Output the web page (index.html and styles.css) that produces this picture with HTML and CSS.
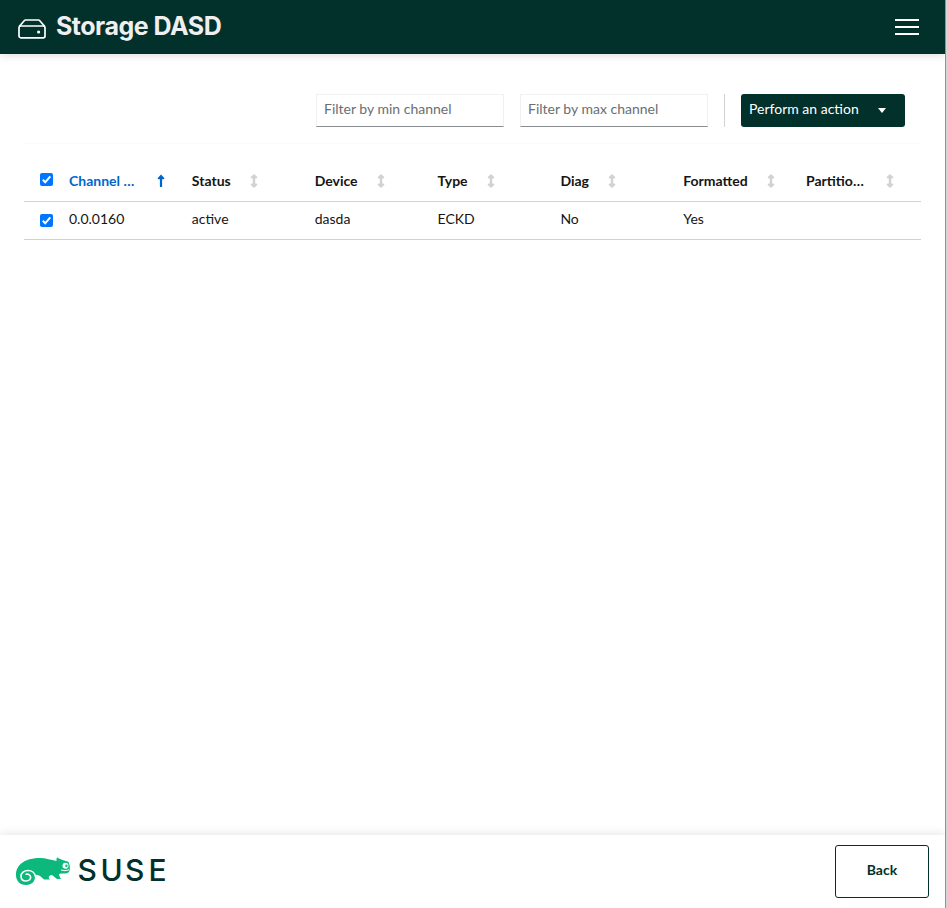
FILE: index.html
```html
<!DOCTYPE html>
<html lang="en">
<head>
<meta charset="utf-8">
<title>Storage DASD</title>
<link rel="stylesheet" href="styles.css">
</head>
<body>
<svg class="defs" aria-hidden="true">
  <symbol id="sort" viewBox="0 0 8 14"><path d="M4 0 7.500 3.300 6.500 4.500H5.200V9.500H6.500L7.500 10.700 4 14 .5 10.700 1.500 9.500H2.800V4.500H1.500L.5 3.300Z"/></symbol>
  <symbol id="sort-up" viewBox="0 0 8 14"><path d="M4 .6 7.500 4.200 6.600 5.200H5.100V13H2.900V5.200H1.400L.5 4.200Z"/></symbol>
  <symbol id="check" viewBox="0 0 13 13"><path d="M2.800 6.800 5.200 9.300 10.300 3.300" fill="none" stroke="#fff" stroke-width="2"/></symbol>
</svg>
<div class="page">
  <header class="header">
    <h1 class="title">
      <svg class="drive" width="28" height="21" viewBox="0 0 28 21" fill="none" stroke="#fff" stroke-width="1.7" stroke-linejoin="round">
        <path d="M1.200 7.500 6.200 1.700Q6.800 1 7.600 1H20.400Q21.200 1 21.800 1.700L26.800 7.500"/>
        <rect x="1" y="7" width="26" height="11.800" rx="1.800"/>
        <circle cx="20.600" cy="13" r="1.600" fill="#fff" stroke="none"/>
      </svg>
      <span class="title-text">Storage DASD</span>
    </h1>
    <button class="menu" aria-label="Menu"><i></i><i></i><i></i></button>
  </header>
  <main class="main">
    <div class="toolbar">
      <input class="filter" placeholder="Filter by min channel">
      <input class="filter" placeholder="Filter by max channel">
      <span class="divider"></span>
      <button class="action">Perform an action <i class="caret"></i></button>
    </div>
    <div class="table">
      <div class="row head">
        <span class="box"><svg><use href="#check"/></svg></span>
        <span class="cell sorted"><b>Channel …</b><svg class="sort"><use href="#sort-up"/></svg></span>
        <span class="cell"><b>Status</b><svg class="sort"><use href="#sort"/></svg></span>
        <span class="cell"><b>Device</b><svg class="sort"><use href="#sort"/></svg></span>
        <span class="cell"><b>Type</b><svg class="sort"><use href="#sort"/></svg></span>
        <span class="cell"><b>Diag</b><svg class="sort"><use href="#sort"/></svg></span>
        <span class="cell"><b>Formatted</b><svg class="sort"><use href="#sort"/></svg></span>
        <span class="cell clipped"><b>Partitio…</b><svg class="sort"><use href="#sort"/></svg></span>
      </div>
      <div class="row">
        <span class="box"><svg><use href="#check"/></svg></span>
        <span class="cell">0.0.0160</span>
        <span class="cell">active</span>
        <span class="cell">dasda</span>
        <span class="cell">ECKD</span>
        <span class="cell">No</span>
        <span class="cell">Yes</span>
        <span class="cell"></span>
      </div>
    </div>
  </main>
  <footer class="footer">
    <svg class="logo" width="160" height="40" viewBox="0 -5 160 40">
      <path fill="#0cb87c" d="M0 18C0 7 10 1 24 1 30 1 35 3 40.500 4 40.500 1 40.500 .3 41.500 .4 45 3 50 3.400 52.500 5 54 8 54.500 12 53 15 50 17.500 46 16 43 17 43 19 44 20 45 22H41C38 20 37 18 35 18 32 19 32.500 21 34 22.500H28C26 21 25 19 23 18.500 21 17.500 19 18 19 20 19 25 15 28 10 28 4 28 0 24 0 18Z"/>
      <path fill="none" stroke="#fff" stroke-width="1.600" stroke-linecap="round" d="M19.500 20C19.200 15.500 15.500 13.500 12 13.500 8 13.500 5 16 5 19.200 5.100 22.500 7.500 24 10 24 13.200 24 14.800 22 14.600 20 14.300 17.700 12 16.800 10.200 17.300"/>
      <circle cx="49.500" cy="8.700" r="3" fill="#fff"/><circle cx="50.400" cy="8.700" r="1.200" fill="#0cb87c"/>
      <path d="M45 13Q49 14.500 53 12.800" fill="none" stroke="#fff" stroke-width="1"/>
      <text class="brand" x="61.500 84.500 109 132.500" y="23.500">SUSE</text>
    </svg>
    <button class="back">Back</button>
  </footer>
</div>
<div class="edge"></div>
</body>
</html>
```
FILE: styles.css
```css
* { box-sizing: border-box; }
body {
  margin: 0;
  height: 908px;
  display: flex;
  overflow: hidden;
  background: #fff;
  color: #151515;
  font: 14px/21px Lato, "Liberation Sans", sans-serif;
}
button, input { font: inherit; }
.defs { position: absolute; width: 0; height: 0; }
.page { flex: 1; display: flex; flex-direction: column; min-width: 0; }
.header {
  height: 54px;
  display: flex;
  align-items: center;
  justify-content: space-between;
  padding: 0 26px 0 18px;
  background: #02302b;
  box-shadow: 0 2px 8px rgba(0, 0, 0, .12);
}
.title { display: flex; align-items: center; margin: 0; color: #efefef; }
.drive { margin: 4px 10px 0 0; }
.title-text {
  padding-bottom: 2px;
  font: 700 25px/36px Inter, sans-serif;
  letter-spacing: -.5px;
  white-space: nowrap;
}
.menu {
  width: 24px;
  padding: 0;
  border: 0;
  background: none;
  display: flex;
  flex-direction: column;
  gap: 5px;
}
.menu i { height: 2px; background: #fff; }
.main { flex: 1; padding: 40px 24px 0; }
.toolbar {
  display: flex;
  justify-content: flex-end;
  gap: 16px;
  height: 50px;
  padding: 0 16px 16px 0;
  border-bottom: 1px solid #fafafa;
}
.filter {
  width: 188px;
  height: 33px;
  padding: 0 7px 4px;
  border: 1px solid #f0f0f0;
  border-bottom-color: #8a8d90;
  background: #fff;
  outline: 0;
}
.filter::placeholder { color: #6a6e73; opacity: 1; }
.divider { width: 1px; height: 33px; background: #d2d2d2; }
.action {
  width: 164px;
  height: 33px;
  display: flex;
  align-items: center;
  justify-content: space-between;
  padding: 0 19px 4px 8px;
  border: 0;
  border-radius: 3px;
  background: #02302b;
  color: #fff;
}
.caret {
  margin-top: 3px;
  border: 4.5px solid transparent;
  border-top: 5px solid #fff;
  border-bottom: 0;
}
.row {
  display: grid;
  grid-template-columns: 45px repeat(6, 122.85px) 1fr;
  align-items: center;
  height: 38px;
  border-bottom: 1px solid #d2d2d2;
}
.head { height: 58px; padding-top: 17px; }
.cell { display: flex; align-items: center; padding-bottom: 4px; white-space: nowrap; }
.head .cell { padding-bottom: 2px; }
.sorted { color: #06c; }
.sort { width: 8px; height: 14px; margin: 1px 0 0 19px; fill: #d2d2d2; }
.sorted .sort { margin-left: 23px; fill: #06c; }
.clipped .sort { margin-left: 22px; }
.box {
  width: 13px;
  height: 13px;
  margin-left: 16px;
  border-radius: 2px;
  background: #0075ff;
}
.head .box { margin-bottom: 4px; }
.box svg { display: block; width: 13px; height: 13px; }
.footer {
  height: 73px;
  display: flex;
  align-items: center;
  justify-content: space-between;
  padding: 0 16px;
  box-shadow: 0 -2px 8px rgba(0, 0, 0, .09);
}
.brand { font: 500 30px Inter, sans-serif; fill: #02302b; }
.back {
  width: 94px;
  height: 53px;
  padding: 0 0 4px;
  border: 1px solid #02302b;
  border-radius: 3px;
  background: #fff;
  color: #02302b;
  font-weight: 700;
}
.edge { width: 2px; border-left: 1px solid #929292; background: #d5d5d8; z-index: 1; }
```
